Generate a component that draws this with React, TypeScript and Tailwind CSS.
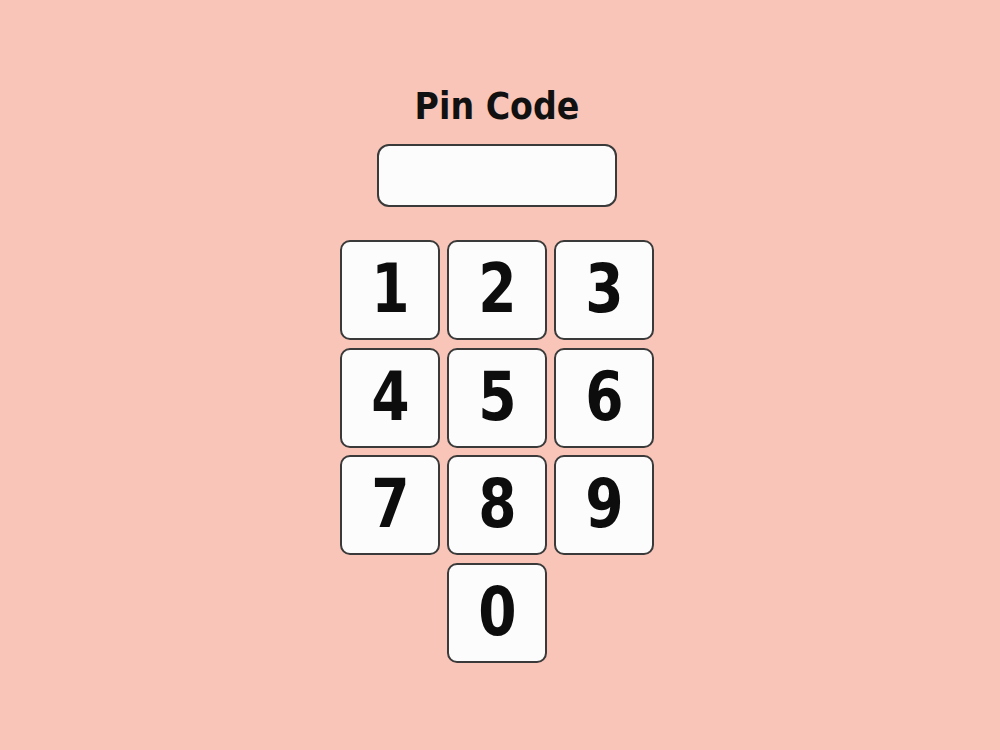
import React from "react";

export default function App() {
  const keys = ["1", "2", "3", "4", "5", "6", "7", "8", "9"];
  const font = { fontFamily: '"DejaVu Sans Condensed", "DejaVu Sans", sans-serif' };
  const btn =
    "w-[100px] h-[100px] bg-[#fcfcfc] border-2 border-[#3a3a3a] rounded-[10px] flex items-center justify-center text-[68px] font-bold text-[#0d0d0d] leading-none pb-[2px]";
  return (
    <div className="w-[1000px] h-[750px] bg-[#f8c5b8] flex flex-col items-center pr-[6px]" style={font}>
      <h1 className="mt-[84px] h-[46px] text-[37px] leading-[46px] font-bold text-[#111]">Pin Code</h1>
      <div className="mt-[14px] w-[240px] h-[63px] bg-[#fcfcfc] border-2 border-[#3a3a3a] rounded-[12px]" />
      <div className="mt-[33px] grid grid-cols-[100px_100px_100px] gap-x-[7px] gap-y-[7.5px]">
        {keys.map((k) => (
          <button key={k} className={btn}>
            <span className="inline-block scale-x-[0.9]">{k}</span>
          </button>
        ))}
        <button className={"col-start-2 " + btn}>
          <span className="inline-block scale-x-[0.9]">0</span>
        </button>
      </div>
    </div>
  );
}
